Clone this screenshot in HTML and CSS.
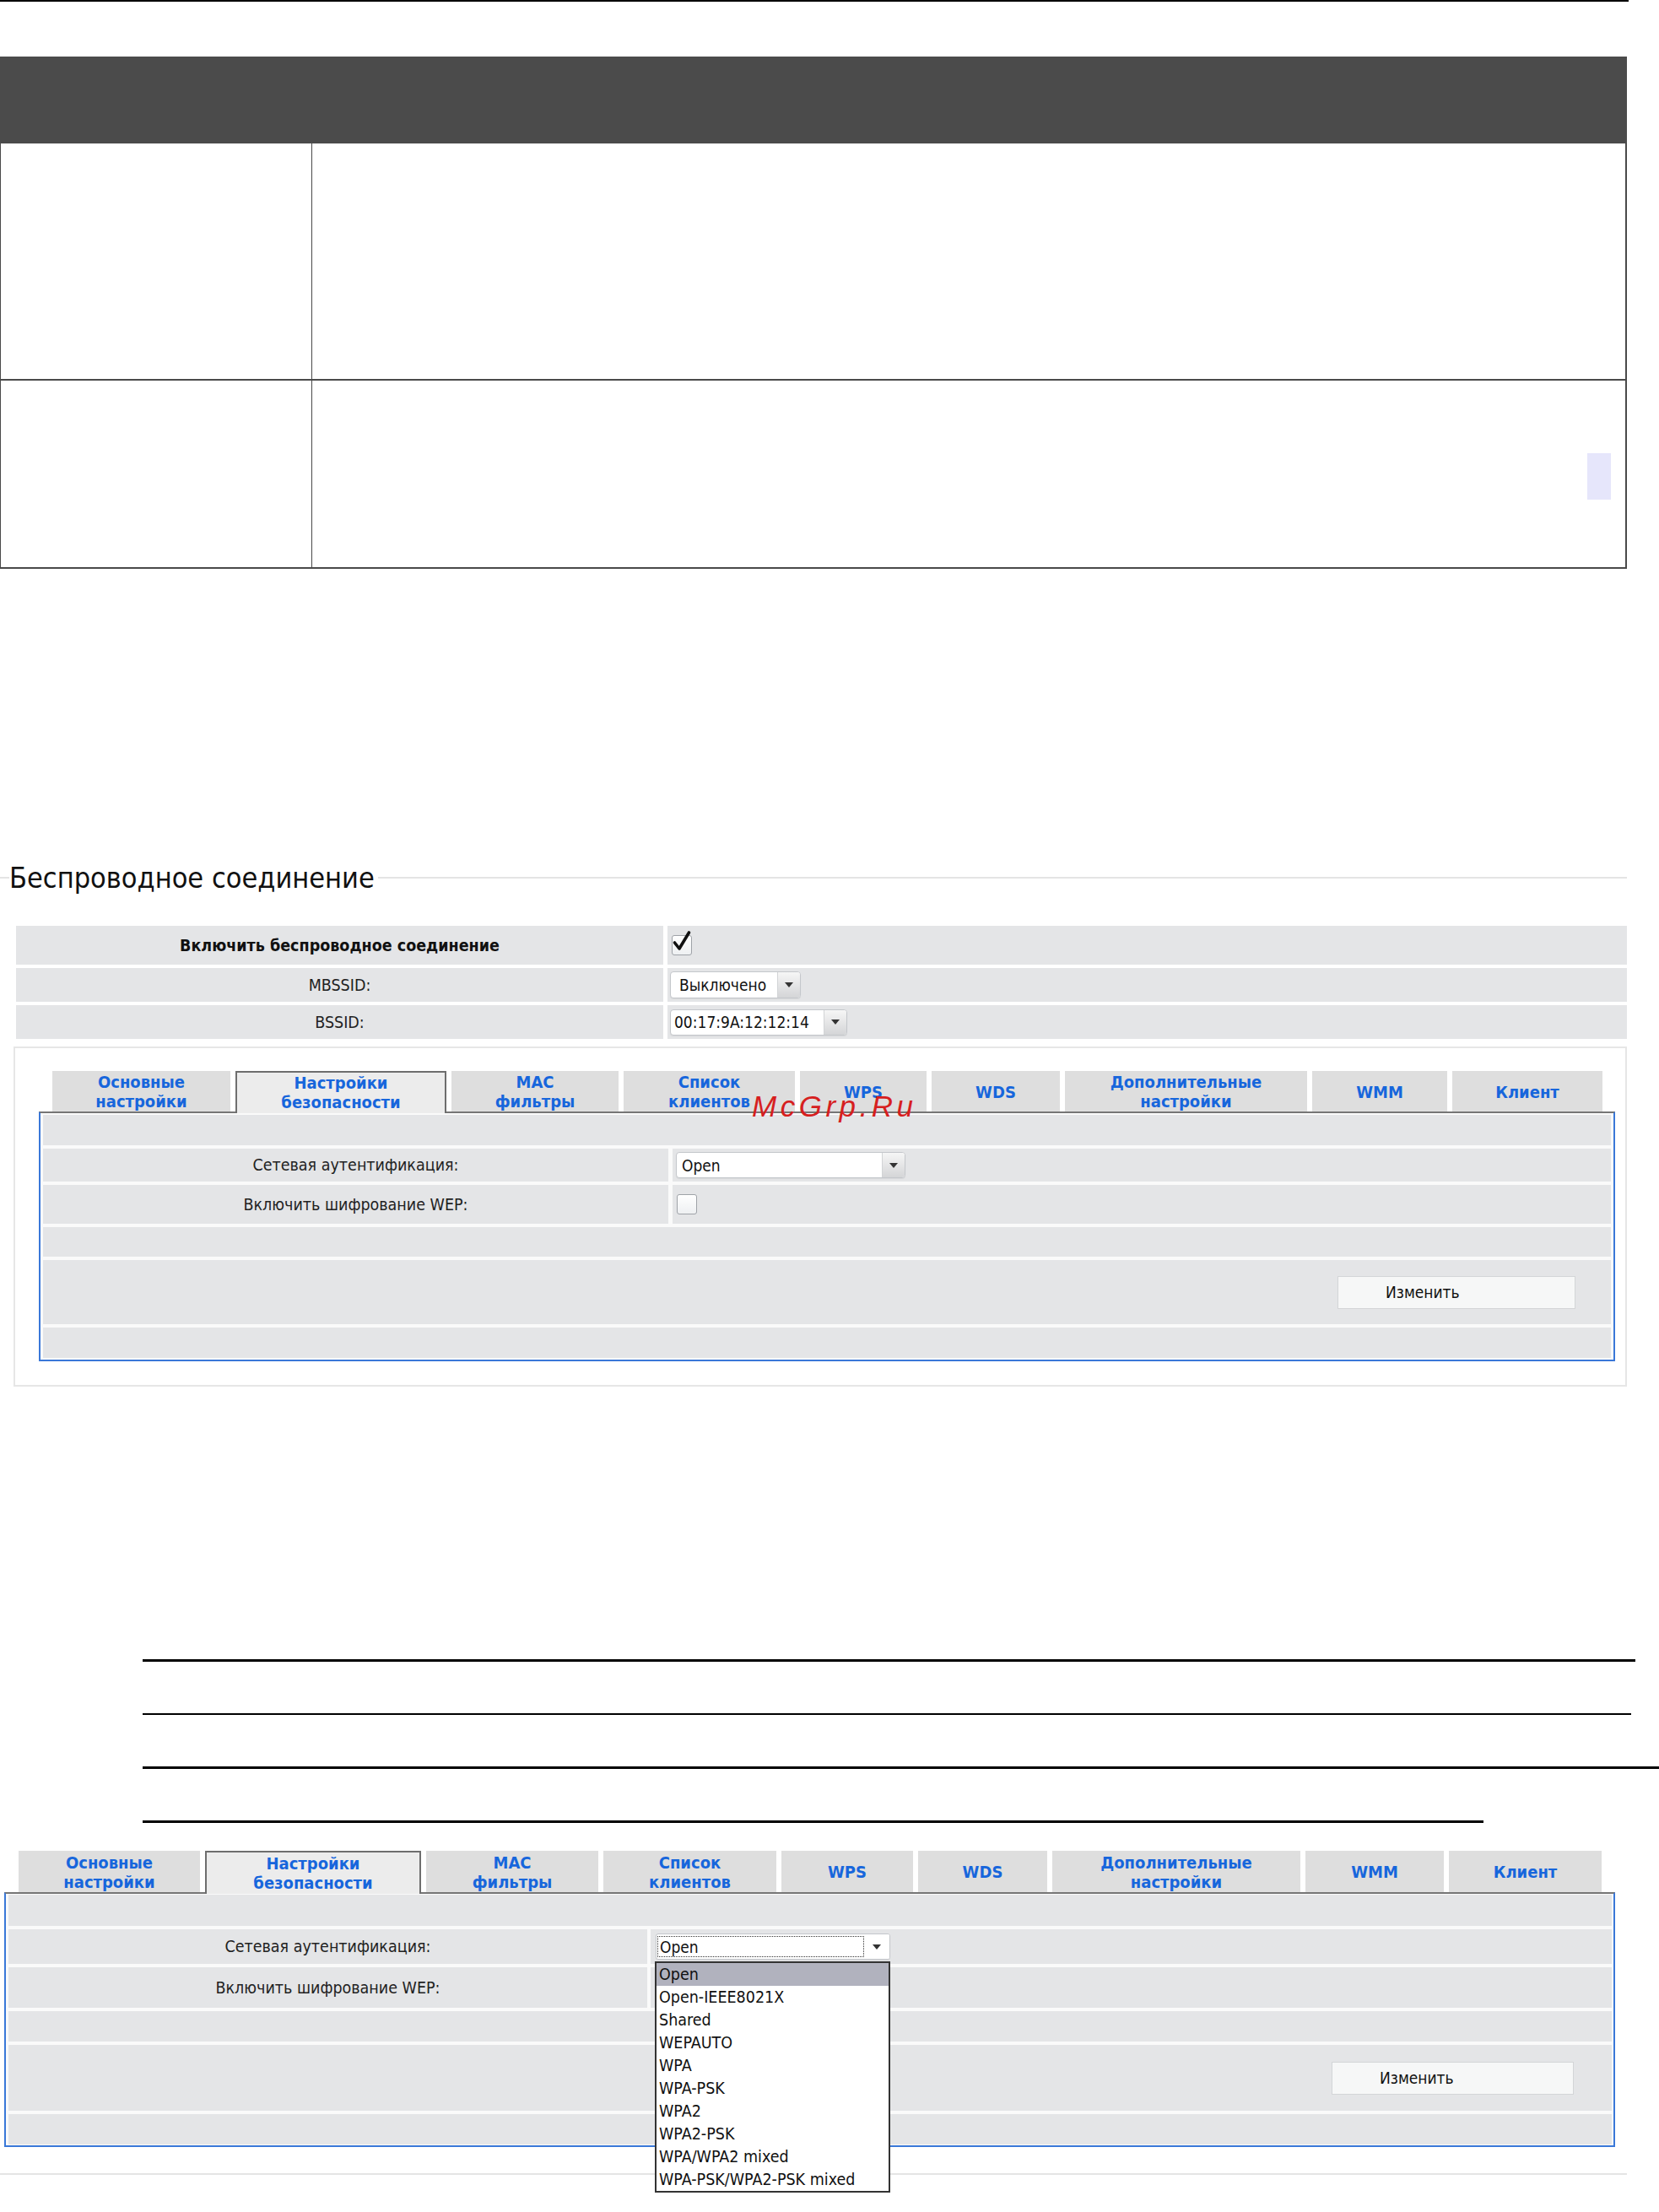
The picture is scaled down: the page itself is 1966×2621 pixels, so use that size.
FILE: index.html
```html
<!DOCTYPE html>
<html lang="ru">
<head>
<meta charset="utf-8">
<title>Беспроводное соединение</title>
<link rel="stylesheet" href="styles.css">
</head>
<body>
<div class="page">
  <div class="topline"></div>

  <div class="doc">
    <div class="doc-head"></div>
    <div class="doc-row r1">
      <div class="doc-c1"></div>
      <div class="doc-c2"></div>
    </div>
    <div class="doc-row r2">
      <div class="doc-c1"></div>
      <div class="doc-c2"><span class="mark"></span></div>
    </div>
  </div>

  <div class="fs-head">
    <span class="fs-lead"></span>
    <span class="fs-title">Беспроводное соединение</span>
    <span class="fs-line"></span>
  </div>

  <div class="settings">
    <div class="cell lab bold">Включить беспроводное соединение</div>
    <div class="cell val">
      <span class="chk checked">
        <svg width="28" height="30" viewBox="0 0 28 30"><path d="M5.5 16 L11 23 L22.5 4" fill="none" stroke="#111" stroke-width="3.6" stroke-linecap="round" stroke-linejoin="round"/></svg>
      </span>
    </div>
    <div class="cell lab">MBSSID:</div>
    <div class="cell val">
      <div class="sel sel-mbssid"><span class="sel-text">Выключено</span><span class="sel-btn"><i class="tri"></i></span></div>
    </div>
    <div class="cell lab">BSSID:</div>
    <div class="cell val">
      <div class="sel sel-bssid"><span class="sel-text">00:17:9A:12:12:14</span><span class="sel-btn"><i class="tri"></i></span></div>
    </div>
  </div>

  <div class="box">
    <div class="tabs tabs-top">
      <div class="tab">Основные<br>настройки</div>
      <div class="tab active">Настройки<br>безопасности</div>
      <div class="tab">MAC<br>фильтры</div>
      <div class="tab">Список<br>клиентов</div>
      <div class="tab">WPS</div>
      <div class="tab">WDS</div>
      <div class="tab">Дополнительные<br>настройки</div>
      <div class="tab">WMM</div>
      <div class="tab">Клиент</div>
    </div>
    <div class="panel panel-top">
      <div class="prow ra"></div>
      <div class="prow split rb">
        <div class="pcell lab">Сетевая аутентификация:</div>
        <div class="pcell val">
          <div class="sel sel-open"><span class="sel-text">Open</span><span class="sel-btn"><i class="tri"></i></span></div>
        </div>
      </div>
      <div class="prow split rc">
        <div class="pcell lab">Включить шифрование WEP:</div>
        <div class="pcell val"><span class="chk empty"></span></div>
      </div>
      <div class="prow rd"></div>
      <div class="prow act re"><div class="btn">Изменить</div></div>
      <div class="prow rf"></div>
    </div>
  </div>

  <div class="rules">
    <div class="rule rule1"></div>
    <div class="rule rule2"></div>
    <div class="rule rule3"></div>
    <div class="rule rule4"></div>
  </div>

  <div class="shot2">
    <div class="tabs tabs-bot">
      <div class="tab">Основные<br>настройки</div>
      <div class="tab active">Настройки<br>безопасности</div>
      <div class="tab">MAC<br>фильтры</div>
      <div class="tab">Список<br>клиентов</div>
      <div class="tab">WPS</div>
      <div class="tab">WDS</div>
      <div class="tab">Дополнительные<br>настройки</div>
      <div class="tab">WMM</div>
      <div class="tab">Клиент</div>
    </div>
    <div class="panel panel-bot">
      <div class="prow ra"></div>
      <div class="prow split rb">
        <div class="pcell lab">Сетевая аутентификация:</div>
        <div class="pcell val open-cell">
          <div class="sel sel-focus"><span class="sel-text"><span class="focus-ring">Open</span></span><span class="sel-btn plain"><i class="tri"></i></span></div>
          <ul class="dropdown">
            <li class="hl">Open</li>
            <li>Open-IEEE8021X</li>
            <li>Shared</li>
            <li>WEPAUTO</li>
            <li>WPA</li>
            <li>WPA-PSK</li>
            <li>WPA2</li>
            <li>WPA2-PSK</li>
            <li>WPA/WPA2 mixed</li>
            <li>WPA-PSK/WPA2-PSK mixed</li>
          </ul>
        </div>
      </div>
      <div class="prow split rc">
        <div class="pcell lab">Включить шифрование WEP:</div>
        <div class="pcell val"><span class="chk empty"></span></div>
      </div>
      <div class="prow rd"></div>
      <div class="prow act re"><div class="btn">Изменить</div></div>
      <div class="prow rf"></div>
    </div>
    <div class="bottom-line"></div>
  </div>

  <div class="watermark">McGrp.Ru</div>
</div>
</body>
</html>
```
FILE: styles.css
```css
* { box-sizing: border-box; margin: 0; padding: 0; }

body {
  margin: 0;
  background: #ffffff;
  font-family: "DejaVu Sans Condensed", "DejaVu Sans", "Liberation Sans", sans-serif;
  color: #1e1e1e;
}

.page {
  position: relative;
  width: 1966px;
  height: 2621px;
  overflow: hidden;
}

/* top rule */
.topline { width: 1930px; height: 2px; background: #000; }

/* document table */
.doc { margin-top: 65px; width: 1928px; }
.doc-head { height: 103px; background: #4b4b4b; }
.doc-row {
  display: flex;
  border-left: 1px solid #4a4a4a;
  border-right: 2px solid #4a4a4a;
  border-bottom: 2px solid #4a4a4a;
}
.doc-row.r1 { height: 281px; }
.doc-row.r2 { height: 223px; }
.doc-c1 { width: 369px; border-right: 1px solid #4a4a4a; }
.doc-c2 { flex: 1; position: relative; }
.mark {
  position: absolute;
  left: 1511px;
  top: 86px;
  width: 28px;
  height: 55px;
  background: #e6e6fb;
}

/* fieldset-like heading */
.fs-head {
  margin-top: 346px;
  width: 1928px;
  height: 40px;
  display: flex;
  align-items: center;
}
.fs-lead { width: 11px; height: 2px; background: #e4e4e4; }
.fs-title {
  font-size: 34px;
  line-height: 40px;
  color: #111;
  padding-right: 4px;
  white-space: nowrap;
}
.fs-line { flex: 1; height: 2px; background: #e4e4e4; }

/* top settings grid */
.settings {
  margin-top: 37px;
  margin-left: 19px;
  width: 1909px;
  display: grid;
  grid-template-columns: 767px 1fr;
  grid-template-rows: 46px 40px 40px;
  column-gap: 5px;
  row-gap: 4px;
}
.cell { background: #e4e5e7; display: flex; align-items: center; }
.lab { justify-content: center; font-size: 19.5px; color: #222; white-space: nowrap; }
.bold { font-weight: bold; color: #111; }
.val { justify-content: flex-start; }
.settings .val { padding-left: 3px; }

/* checkbox */
.chk {
  display: inline-block;
  position: relative;
  width: 24px;
  height: 24px;
  border: 1px solid #9fa3a8;
  border-radius: 3px;
  background: linear-gradient(#ffffff, #eef0f2);
}
.chk.checked { margin-left: 2px; }
.chk.checked svg { position: absolute; left: -3px; top: -8px; }

/* select */
.sel {
  display: flex;
  align-items: stretch;
  height: 31px;
  background: #fff;
  border: 1px solid #c4c7cb;
  border-radius: 4px;
  font-size: 19px;
  color: #111;
  overflow: hidden;
  box-shadow: 0 1px 1px rgba(0,0,0,0.06);
}
.sel-text { flex: 1; display: flex; align-items: center; padding-left: 6px; white-space: nowrap; }
.sel-btn {
  width: 27px;
  border-left: 1px solid #d2d4d6;
  background: linear-gradient(#f6f6f6, #d4d5d7);
  display: flex;
  align-items: center;
  justify-content: center;
}
.sel-btn.plain { background: #fff; border-left: none; width: 30px; }
.tri {
  display: block;
  width: 0;
  height: 0;
  border-left: 5px solid transparent;
  border-right: 5px solid transparent;
  border-top: 6px solid #333;
}
.sel-mbssid { width: 155px; height: 32px; }
.sel-mbssid .sel-text { padding-left: 10px; }
.sel-bssid { width: 210px; }
.sel-bssid .sel-text { padding-left: 4px; }
.sel-open { width: 272px; margin-left: 4px; }
.sel-focus { width: 278px; margin-left: 6px; border-radius: 3px; }
.sel-focus .sel-text { padding: 2px 0 2px 1px; }
.focus-ring {
  display: flex;
  align-items: center;
  width: 100%;
  height: 100%;
  border: 1px dotted #333;
  padding-left: 2px;
}

/* outer box around tabbed panel */
.box {
  margin-top: 9px;
  margin-left: 16px;
  width: 1912px;
  border: 2px solid #e6e6e6;
  padding: 27px 12px 28px 28px;
}

/* tabs */
.tabs { display: flex; gap: 6px; height: 48px; align-items: flex-start; }
.tabs-top { padding-left: 16px; }
.tab {
  height: 48px;
  background: #dedede;
  display: flex;
  align-items: center;
  justify-content: center;
  text-align: center;
  font-weight: bold;
  font-size: 20px;
  line-height: 23px;
  color: #1766dc;
  padding-top: 2px;
  white-space: nowrap;
}
.tab.active {
  position: relative;
  z-index: 1;
  height: 50px;
  background: #ececec;
  border: 2px solid #6e6e6e;
  border-bottom: none;
  padding-top: 0;
}
.tabs-top .tab:nth-child(1) { width: 211px; }
.tabs-top .tab:nth-child(2) { width: 250px; }
.tabs-top .tab:nth-child(3) { width: 198px; }
.tabs-top .tab:nth-child(4) { width: 203px; }
.tabs-top .tab:nth-child(5) { width: 150px; }
.tabs-top .tab:nth-child(6) { width: 152px; }
.tabs-top .tab:nth-child(7) { width: 287px; }
.tabs-top .tab:nth-child(8) { width: 160px; }
.tabs-top .tab:nth-child(9) { width: 178px; }

.tabs-bot { height: 49px; padding-left: 17px; }
.tabs-bot .tab { height: 49px; }
.tabs-bot .tab.active { height: 51px; }
.tabs-bot .tab:nth-child(1) { width: 215px; }
.tabs-bot .tab:nth-child(2) { width: 256px; }
.tabs-bot .tab:nth-child(3) { width: 204px; }
.tabs-bot .tab:nth-child(4) { width: 205px; }
.tabs-bot .tab:nth-child(5) { width: 156px; }
.tabs-bot .tab:nth-child(6) { width: 153px; }
.tabs-bot .tab:nth-child(7) { width: 294px; }
.tabs-bot .tab:nth-child(8) { width: 164px; }
.tabs-bot .tab:nth-child(9) { width: 181px; }

/* panel */
.panel {
  border: 2px solid #3a78d8;
  border-top-color: #767676;
  background: #fafafa;
  display: flex;
  flex-direction: column;
  gap: 4px;
}
.panel-top { width: 1868px; padding: 2px 3px; }
.panel-bot { width: 1909px; padding: 1px 2px 1px 3px; }

.prow { background: #e4e5e7; display: flex; }
.prow.split { display: grid; background: transparent; }
.panel-top .split { grid-template-columns: 741px 1fr; column-gap: 5px; }
.panel-bot .split { grid-template-columns: 757px 1fr; column-gap: 4px; }
.pcell { background: #e4e5e7; display: flex; align-items: center; }
.pcell.val .chk { margin-left: 5px; }

.panel-top .ra { height: 36px; }
.panel-top .rb { height: 39px; }
.panel-top .rc { height: 46px; }
.panel-top .rd { height: 35px; }
.panel-top .re { height: 76px; }
.panel-top .rf { height: 36px; }

.panel-bot .ra { height: 37px; }
.panel-bot .rb { height: 41px; }
.panel-bot .rc { height: 48px; }
.panel-bot .rd { height: 36px; }
.panel-bot .re { height: 78px; }
.panel-bot .rf { height: 36px; }

.prow.act { justify-content: flex-end; align-items: center; padding-right: 42px; }
.panel-bot .prow.act { padding-right: 45px; }
.btn {
  width: 282px;
  height: 39px;
  background: #f6f7f7;
  border: 1px solid #d3d5d7;
  font-size: 19px;
  color: #111;
  display: flex;
  align-items: center;
  padding-left: 56px;
}
.panel-bot .btn { width: 287px; }

/* horizontal rules */
.rules { margin-top: 323px; margin-left: 169px; display: flex; flex-direction: column; }
.rule { background: #000; }
.rule1 { width: 1769px; height: 3px; }
.rule2 { width: 1764px; height: 2px; margin-top: 61px; }
.rule3 { width: 1797px; height: 3px; margin-top: 61px; }
.rule4 { width: 1589px; height: 3px; margin-top: 61px; }

/* second screenshot */
.shot2 { margin-top: 33px; margin-left: 5px; }
.open-cell { position: relative; }
.dropdown {
  position: absolute;
  left: 5px;
  top: 38px;
  width: 279px;
  list-style: none;
  background: #fff;
  border: 2px solid #333;
  z-index: 2;
}
.dropdown li {
  height: 27px;
  line-height: 27px;
  padding-left: 3px;
  font-size: 19.5px;
  color: #111;
  white-space: nowrap;
}
.dropdown li.hl { background: #b1b2be; }
.bottom-line { margin-top: 31px; margin-left: -5px; width: 1928px; height: 2px; background: #e4e4e4; }

/* watermark overlay */
.watermark {
  position: absolute;
  left: 891px;
  top: 1293px;
  font-family: "Liberation Sans", Arial, sans-serif;
  font-style: italic;
  font-size: 35px;
  line-height: 35px;
  letter-spacing: 4.5px;
  color: #d61f1f;
  z-index: 3;
  white-space: nowrap;
}
```
